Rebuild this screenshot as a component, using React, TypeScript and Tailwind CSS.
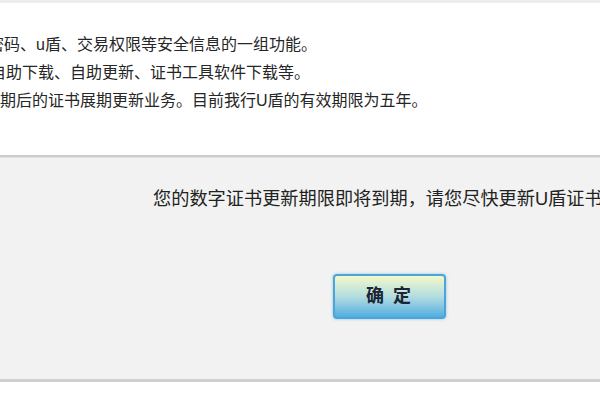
import React from "react";

const font = { fontFamily: "'Liberation Sans', 'Noto Sans CJK SC', sans-serif" };

export default function App() {
  return (
    <div className="w-[600px] h-[400px] overflow-hidden bg-white flex flex-col" style={font}>
      {/* top edge */}
      <div className="h-[3px] bg-[#ededed]" />

      {/* info text, clipped on the left */}
      <div className="h-[152px] pt-[28px] text-[16px] leading-[28px] text-[#262626] whitespace-nowrap overflow-hidden">
        <div className="-ml-[12px]">密码、u盾、交易权限等安全信息的一组功能。</div>
        <div className="-ml-[10px]">自助下载、自助更新、证书工具软件下载等。</div>
        <div>期后的证书展期更新业务。目前我行U盾的有效期限为五年。</div>
      </div>

      {/* dialog */}
      <div className="border-t-2 border-[#cbcbcb] border-b-[3px] border-b-[#cfcfcf] bg-[#f1f2f1] h-[227px] flex flex-col">
        <div className="border-t border-[#e2e2e2]" />
        <p className="pl-[153px] pt-[29px] text-[18.2px] leading-[24px] text-[#222] whitespace-nowrap overflow-hidden">
          您的数字证书更新期限即将到期，请您尽快更新U盾证书。
        </p>
        <div className="pl-[333px] mt-[63px]">
          <button className="w-[113px] h-[45px] rounded-[4px] border-2 border-[#4ba5d8] bg-linear-to-b from-[#f2f9c8] via-[#b3dde0] to-[#4fade0] shadow-[0_0_3px_rgba(80,160,220,0.6)] text-[18px] font-bold text-[#1b2533] tracking-[2px]">
            确 定
          </button>
        </div>
      </div>

      <div className="flex-1 bg-white" />
    </div>
  );
}
